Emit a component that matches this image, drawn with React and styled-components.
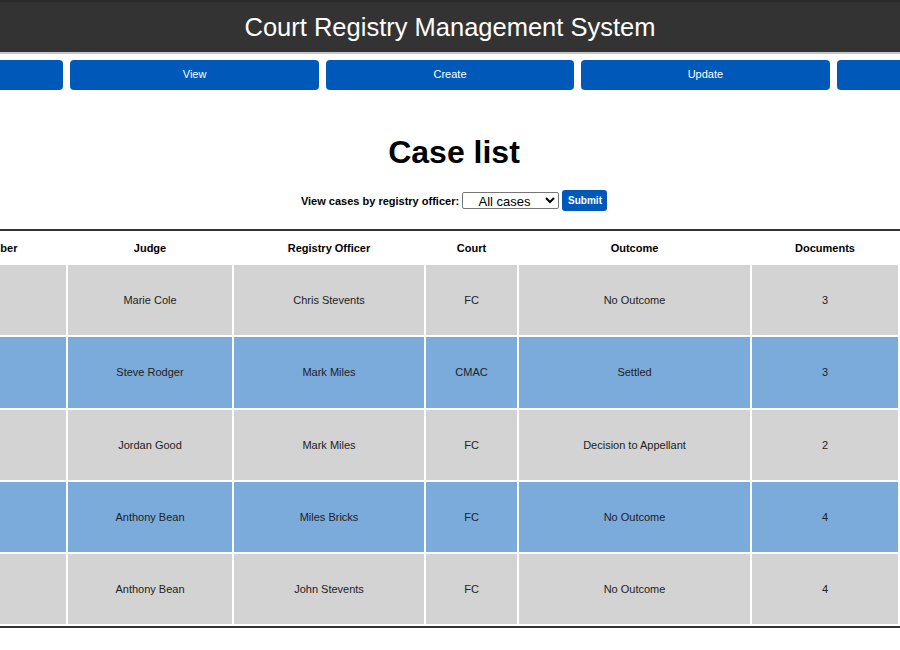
import React from 'react'
import styled, { createGlobalStyle } from 'styled-components'

const GlobalStyle = createGlobalStyle`
  body {
    margin: 0;
    background: #fff;
    font-family: "Liberation Sans", Arial, sans-serif;
  }
`

const Viewport = styled.div`
  display: flex;
  justify-content: center;
  overflow: hidden;
  width: 100%;
`

const Page = styled.div`
  flex: 0 0 1280px;
  width: 1280px;
`

const Header = styled.header`
  height: 50px;
  background: #333;
  border-top: 2px solid #2a2a2a;
  border-bottom: 2px solid #c6c6c6;
  display: flex;
  align-items: center;
  justify-content: center;
`

const Title = styled.h1`
  margin: 0;
  color: #fff;
  font-size: 25.5px;
  font-weight: normal;
`

const Nav = styled.nav`
  display: flex;
  gap: 7px;
  padding: 6px 5px 0;
`

const NavButton = styled.button`
  flex: 1;
  height: 30px;
  padding: 0 0 2px;
  border: none;
  border-radius: 4px;
  background: #0059b9;
  color: #fff;
  font-family: inherit;
  font-size: 11px;
`

const Main = styled.main`
  padding-left: 8px;
`

const Heading = styled.h2`
  margin: 44px 0 0;
  text-align: center;
  font-size: 32px;
  font-weight: bold;
  line-height: 37px;
`

const FilterForm = styled.form`
  display: flex;
  justify-content: center;
  align-items: center;
  gap: 3px;
  margin-top: 19px;
`

const Label = styled.label`
  font-size: 11px;
  font-weight: bold;
`

const Select = styled.select`
  width: 97px;
  height: 17px;
  padding: 0;
  font-family: inherit;
  font-size: 13px;
  text-align: center;
  text-align-last: center;
  border: 1px solid #767676;
  border-radius: 2px;
  background: #fff;
`

const SubmitButton = styled.button`
  width: 45px;
  height: 21px;
  border: none;
  border-radius: 3px;
  background: #0059b9;
  color: #fff;
  font-family: inherit;
  font-size: 10px;
  font-weight: bold;
`

const Table = styled.table`
  margin: 18px 0 0 -8px;
  width: 1280px;
  table-layout: fixed;
  border-collapse: separate;
  border-spacing: 2px;
  border-top: 2px solid #333;
  border-bottom: 2px solid #333;
`

const Th = styled.th`
  height: 30px;
  padding: 0;
  font-size: 11px;
  font-weight: bold;
  color: #000;
`

const Td = styled.td`
  height: 70.25px;
  padding: 0;
  text-align: center;
  font-size: 11px;
  color: #222;
  background: ${p => (p.$alt ? '#7aabdb' : '#d3d3d3')};
`

const columns = [
  { label: 'Case ID', width: 84 },
  { label: 'Case Number', width: 168 },
  { label: 'Judge', width: 164 },
  { label: 'Registry Officer', width: 190 },
  { label: 'Court', width: 91 },
  { label: 'Outcome', width: 231 },
  { label: 'Documents', width: 146 },
  { label: 'Actions', width: 188 },
]

const cases = [
  ['1', '101', 'Marie Cole', 'Chris Stevents', 'FC', 'No Outcome', '3', ''],
  ['2', '102', 'Steve Rodger', 'Mark Miles', 'CMAC', 'Settled', '3', ''],
  ['3', '103', 'Jordan Good', 'Mark Miles', 'FC', 'Decision to Appellant', '2', ''],
  ['4', '104', 'Anthony Bean', 'Miles Bricks', 'FC', 'No Outcome', '4', ''],
  ['5', '105', 'Anthony Bean', 'John Stevents', 'FC', 'No Outcome', '4', ''],
]

export default function App() {
  return (
    <Viewport>
      <GlobalStyle />
      <Page>
        <Header>
          <Title>Court Registry Management System</Title>
        </Header>
        <Nav>
          {['Home', 'View', 'Create', 'Update', 'Delete'].map(l => (
            <NavButton key={l}>{l}</NavButton>
          ))}
        </Nav>
        <Main>
          <Heading>Case list</Heading>
          <FilterForm onSubmit={e => e.preventDefault()}>
            <Label>View cases by registry officer:</Label>
            <Select defaultValue="all">
              <option value="all">All cases</option>
              <option value="cs">Chris Stevents</option>
              <option value="mm">Mark Miles</option>
              <option value="mb">Miles Bricks</option>
              <option value="js">John Stevents</option>
            </Select>
            <SubmitButton type="submit">Submit</SubmitButton>
          </FilterForm>
          <Table>
            <colgroup>
              {columns.map(c => <col key={c.label} style={{ width: c.width }} />)}
            </colgroup>
            <thead>
              <tr>
                {columns.map(c => <Th key={c.label}>{c.label}</Th>)}
              </tr>
            </thead>
            <tbody>
              {cases.map((row, i) => (
                <tr key={i}>
                  {row.map((v, j) => <Td key={j} $alt={i % 2 === 1}>{v}</Td>)}
                </tr>
              ))}
            </tbody>
          </Table>
        </Main>
      </Page>
    </Viewport>
  )
}
